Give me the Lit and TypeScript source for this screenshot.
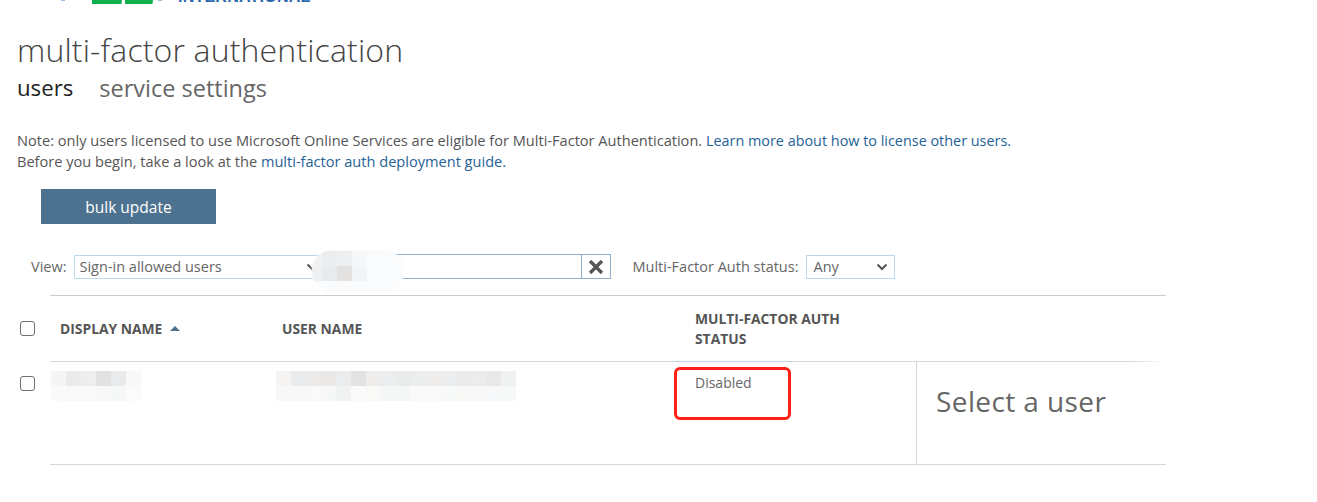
import { LitElement, html, css } from "lit";
import { customElement } from "lit/decorators.js";

const NAME_CELLS = [
  ["#f5f5f5", "#ebebeb", "#eeeeee", "#e2e2e2", "#e9eaec", "#f8f8f8"],
  ["#fafafa", "#f9f9f9", "#f9f9f9", "#f8f8f8", "#f6f7f7", "#fafbfa"],
];
const USER_CELLS = [
  ["#f5f4f2", "#e9ebed", "#eceae8", "#ebe9e8", "#ebecee", "#e3e3e3", "#efedeb", "#ebedef", "#eaebeb", "#eceeee", "#efedec", "#ebedee", "#eaebea", "#ebeceb", "#e9e9e9", "#f0f1f1"],
  ["#f8f8f8", "#f8f8f8", "#f9f9f9", "#f6f7f7", "#f1f3f3", "#fafafa", "#f9f9f7", "#f5f6f6", "#f5f6f6", "#fafafa", "#fafafa", "#f7f8f8", "#f8f8f6", "#f8f8f8", "#f7f8f9", "#f7f8f8"],
];
const VIEW_CELLS = [
  ["#f0f1f2", "#ecedef", "#eeeff0", "#f6f7f9"],
  ["#eef0f1", "#e8ebee", "#e3e2e1", "#f1f5f8"],
];

const chevron = html`<svg class="chev" width="12" height="8" viewBox="0 0 12 8"><path d="M1.5 1.5 6 6l4.5-4.5" fill="none" stroke="#555" stroke-width="2"/></svg>`;

const cells = (rows: string[][]) => html`
  ${rows.map((r) => html`<div class="cellrow">${r.map((c) => html`<i class="cell" style="background:${c}"></i>`)}</div>`)}
`;

@customElement("app-root")
export class AppRoot extends LitElement {
  static styles = css`
    :host { display: block; width: 1317px; height: 502px; overflow: hidden; background: #fff; position: relative;
      font-family: "Open Sans", "Noto Sans", sans-serif; color: #666; font-size: 14.5px; }
    .logo { height: 5px; position: relative; overflow: hidden; display: flex; padding-left: 92px; gap: 3px; }
    .logo .g { width: 30px; height: 4px; background: #12b04d; clip-path: polygon(0 0, 100% 0, 98% 100%, 0 100%); }
    .logo .g + .g { width: 28px; }
    .logo .tick1, .logo .tick2 { position: absolute; top: 0; width: 4px; height: 1px; background: #9dbbdc; }
    .logo .tick1 { left: 61px; }
    .logo .tick2 { left: 158px; }
    .logo .intl { position: absolute; left: 178px; top: -12px; font: 700 16.15px/16px "Liberation Sans", sans-serif; color: #2a67ad; letter-spacing: 0.15px; }
    h1 { margin: 24px 0 0 17px; font-weight: 300; font-size: 32px; line-height: 42px; color: #444; letter-spacing: 0.15px; }
    .tabs { display: flex; gap: 26px; margin-left: 17px; font-size: 23.5px; line-height: 30px; margin-top: 2px; color: #666; }
    .tabs .on { color: #222; font-size: 22.2px; }
    .note { margin: 27px 0 0 17px; line-height: 20px; font-size: 14.58px; color: #555; }
    a { color: #1f6296; text-decoration: none; }
    a.tight { font-size: 14.4px; }
    .bulk { display: block; margin: 18px 0 0 41px; width: 175px; height: 35px; border: 0; padding: 0; background: #4d7290; color: #fff;
      font: 400 15.5px "Open Sans", sans-serif; }
    .bar { display: flex; align-items: center; margin: 30px 0 0 31px; height: 25px; position: relative; }
    .lab { font-size: 14.5px; color: #666; }
    .sel { box-sizing: border-box; height: 24px; border: 1px solid #bcd8ec; display: flex; align-items: center; justify-content: space-between;
      font-size: 14.5px; color: #666; padding: 0 5px; background: #fff; }
    .sel.view { width: 250px; margin-left: 7px; }
    .search { box-sizing: border-box; height: 25px; width: 257px; border: 1px solid #8eaecb; border-left: 0; border-right: 0; }
    .x { box-sizing: border-box; width: 30px; height: 25px; border: 1px solid #8eaecb; display: flex; align-items: center; justify-content: center; background: #fff; padding: 0; }
    .lab.st { margin-left: 22px; margin-right: 8px; }
    .sel.any { width: 89px; padding: 0 6px; }
    .chev { flex: none; }
    .table { margin-top: 16px; width: 1166px; display: grid; grid-template-columns: 50px 222px 413px 231px 250px; }
    .h { height: 65px; border-top: 1px solid #ccc; display: flex; align-items: center; font-weight: 700; font-size: 13.85px; line-height: 20px; color: #555; border-bottom: 1px solid #cfd6dc; }
    .c0 { display: flex; align-items: center; padding-left: 20px; }
    .h.c0 { border: 0; height: 67px; }
    .tick { appearance: none; display: block; margin: 0; width: 15px; height: 15px; box-sizing: border-box; border: 1.5px solid #6f6f6f; border-radius: 3px; background: #fff; }
    .h.n { padding-left: 10px; gap: 8px; }
    .h.u, .h.s { padding-left: 10px; }
    .sort { flex: none; }
    .r { height: 102px; border-bottom: 1px solid #cfd6dc; }
    .r0 { height: 103px; align-items: flex-start; padding-top: 14px; box-sizing: border-box; }
    .r.n { padding: 9px 0 0 1px; height: 93px; }
    .r.u { padding: 9px 0 0 4px; height: 93px; }
    .r.s { padding: 11px 0 0 10px; height: 91px; font-size: 14px; line-height: 20px; color: #666; }
    .r.d { border-left: 1px solid #cfd6dc; padding: 19px 0 0 19px; box-sizing: border-box; height: 103px; font-size: 28px; line-height: 40px; color: #666; letter-spacing: 0.4px; }
    .cellrow { display: flex; }
    .cell { display: block; width: 15px; height: 15px; flex: none; }
    .blob { position: absolute; left: 281px; top: -4px; width: 92px; height: 42px; background: #fafbfc; border-radius: 21px; overflow: hidden; padding-top: 1px; box-sizing: border-box; box-shadow: 0 0 3px #fafbfc; }
    .blob .cellrow { margin-left: -5px; }
    .mark { position: absolute; left: 674px; top: 367px; width: 117px; height: 53px; box-sizing: border-box; border: 3.5px solid #ff1f14; border-radius: 6px; }
    .fade { position: absolute; left: 1130px; top: 361px; width: 36px; height: 1px; background: linear-gradient(90deg, transparent, #fff); }
  `;

  render() {
    return html`
      <div class="logo"><span class="tick1"></span><span class="g"></span><span class="g"></span><span class="tick2"></span><span class="intl">INTERNATIONAL</span></div>
      <h1>multi-factor authentication</h1>
      <div class="tabs"><span class="on">users</span><span>service settings</span></div>
      <p class="note">Note: only users licensed to use Microsoft Online Services are eligible for Multi-Factor Authentication. <a class="tight">Learn more about how to license other users.</a><br />Before you begin, take a look at the <a>multi-factor auth deployment guide.</a></p>
      <button class="bulk">bulk update</button>
      <div class="bar">
        <span class="lab">View:</span>
        <div class="sel view"><span>Sign-in allowed users</span>${chevron}</div>
        <div class="search"></div>
        <button class="x"><svg width="16" height="14" viewBox="0 0 16 14"><path d="M2 1l12 12M14 1 2 13" stroke="#555" stroke-width="3.4" fill="none"/></svg></button>
        <span class="lab st">Multi-Factor Auth status:</span>
        <div class="sel any"><span>Any</span>${chevron}</div>
        <div class="blob">${cells(VIEW_CELLS)}</div>
      </div>
      <div class="table">
        <div class="h c0"><input type="checkbox" class="tick" /></div>
        <div class="h n">DISPLAY NAME <svg class="sort" width="10" height="5" viewBox="0 0 10 5"><path d="M5 0l5 5H0z" fill="#4d7290"/></svg></div>
        <div class="h u">USER NAME</div>
        <div class="h s">MULTI-FACTOR AUTH<br />STATUS</div>
        <div class="h"></div>
        <div class="c0 r0"><input type="checkbox" class="tick" /></div>
        <div class="r n">${cells(NAME_CELLS)}</div>
        <div class="r u">${cells(USER_CELLS)}</div>
        <div class="r s">Disabled</div>
        <div class="r d">Select a user</div>
      </div>
      <div class="mark"></div>
      <div class="fade"></div>
    `;
  }
}
